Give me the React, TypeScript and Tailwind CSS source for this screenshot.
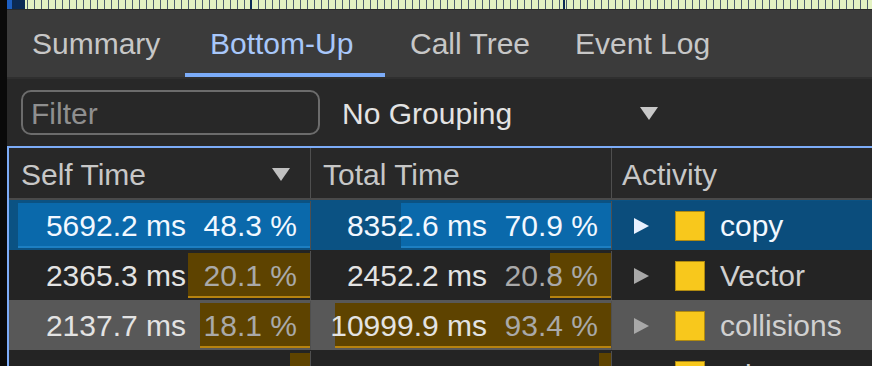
import React from "react";

type RowState = "selected" | "hover" | "normal";

interface Row {
  self: string;
  selfPct: string;
  selfBar: number;
  total: string;
  totalPct: string;
  totalBar: number;
  name: string;
  state: RowState;
}

const rows: Row[] = [
  { self: "5692.2 ms", selfPct: "48.3 %", selfBar: 292, total: "8352.6 ms", totalPct: "70.9 %", totalBar: 210, name: "copy", state: "selected" },
  { self: "2365.3 ms", selfPct: "20.1 %", selfBar: 122, total: "2452.2 ms", totalPct: "20.8 %", totalBar: 61, name: "Vector", state: "normal" },
  { self: "2137.7 ms", selfPct: "18.1 %", selfBar: 110, total: "10999.9 ms", totalPct: "93.4 %", totalBar: 276, name: "collisions", state: "hover" },
  { self: "404.7 ms", selfPct: "3.4 %", selfBar: 20, total: "406.9 ms", totalPct: "3.5 %", totalBar: 12, name: "Minor GC", state: "normal" },
];

const tabs = [
  { label: "Summary", width: "w-[178px]" },
  { label: "Bottom-Up", width: "w-[200px]" },
  { label: "Call Tree", width: "w-[165px]" },
  { label: "Event Log", width: "w-[185px]" },
];

function Triangle({ className = "" }: { className?: string }) {
  return (
    <svg width="18" height="13" viewBox="0 0 18 13" className={className}>
      <path d="M0 0 H18 L9 13 Z" fill="currentColor" />
    </svg>
  );
}

function TimeCell({
  ms,
  pct,
  bar,
  state,
  lead,
}: {
  ms: string;
  pct: string;
  bar: number;
  state: RowState;
  lead?: boolean;
}) {
  const selected = state === "selected";
  return (
    <div
      className={`relative flex items-center justify-end pr-[13px] border-r border-[#4f4f4f] ${
        lead ? "w-[302px]" : "w-[301px]"
      }`}
    >
      <div
        className={`absolute right-0 top-[2px] bottom-[2px] border-b-2 ${
          selected ? "bg-[#0a69ab] border-[#1d7fc2]" : "bg-[#5e4300] border-[#b7830f]"
        }`}
        style={{ width: bar }}
      />
      <span className={`relative ${selected ? "text-[#f2f8ff]" : "text-[#e3e3e3]"}`}>{ms}</span>
      <span
        className={`relative w-[111px] text-right ${selected ? "text-[#f2f8ff]" : "text-[#a9a9a9]"}`}
      >
        {pct}
      </span>
    </div>
  );
}

export default function App() {
  return (
    <div className="flex w-[872px] h-[366px] overflow-hidden bg-black font-['Liberation_Sans',Arial,sans-serif]">
      <div className="w-[7px] shrink-0 bg-[#0a0a0a]" />
      <div className="flex-1 flex flex-col min-w-0">
        {/* timeline strip */}
        <div className="relative h-[9px] shrink-0 bg-[repeating-linear-gradient(90deg,#e3f2c2_0px,#e3f2c2_6px,#4d5d6e_6px,#4d5d6e_7px)]">
          <div className="absolute left-0 top-0 h-full w-[5px] bg-[#1d5fc2]" />
          <div className="absolute left-[5px] top-0 h-full w-[13px] bg-[#0b2a55]" />
          <div className="absolute left-[243px] top-0 h-full w-[2px] bg-[#0b2a55]" />
          <div className="absolute left-[556px] top-0 h-full w-[2px] bg-[#0b2a55]" />
        </div>
        <div className="h-px shrink-0 bg-[#2a2a2a]" />

        {/* tabs */}
        <div className="flex h-[69px] shrink-0 bg-[#3b3b3b] border-b-2 border-[#2f2f2f]">
          {tabs.map((t) => {
            const active = t.label === "Bottom-Up";
            return (
              <div
                key={t.label}
                className={`flex items-center pt-[3px] pl-[25px] text-[30px] border-b-[4px] ${t.width} ${
                  active ? "text-[#a8c7fa] border-[#7cacf8]" : "text-[#c7c7c7] border-transparent"
                }`}
              >
                {t.label}
              </div>
            );
          })}
        </div>

        {/* toolbar */}
        <div className="flex items-center h-[67px] shrink-0 bg-[#282828] pl-[14px]">
          <div className="flex items-center w-[299px] h-[45px] rounded-[10px] border-2 border-[#6c6c6c] pl-[8px] pt-[2px] text-[30px] text-[#8f8f8f]">
            Filter
          </div>
          <div className="flex items-center w-[338px] pl-[22px] pt-[2px] text-[30px] text-[#e3e3e3]">
            <span className="flex-1">No Grouping</span>
            <Triangle className="text-[#c8c8c8]" />
          </div>
        </div>

        {/* table */}
        <div className="flex-1 flex flex-col border-l-2 border-t-2 border-[#7cacf8] bg-[#242424] text-[30px]">
          <div className="flex h-[52px] shrink-0 bg-[#282828] border-b-2 border-[#4a4a4a] text-[#c7c7c7]">
            <div className="flex items-center w-[302px] pl-[12px] pr-[20px] pt-[2px] border-r border-[#4f4f4f]">
              <span className="flex-1">Self Time</span>
              <Triangle className="text-[#c0c0c0]" />
            </div>
            <div className="flex items-center w-[301px] pl-[12px] pt-[2px] border-r border-[#4f4f4f]">Total Time</div>
            <div className="flex items-center flex-1 pl-[10px] pt-[2px]">Activity</div>
          </div>

          {rows.map((r) => {
            const bg =
              r.state === "selected" ? "bg-[#0b5283]" : r.state === "hover" ? "bg-[#585858]" : "bg-[#242424]";
            const selected = r.state === "selected";
            return (
              <div key={r.name} className={`flex h-[50px] shrink-0 pt-[1px] ${bg}`}>
                <TimeCell ms={r.self} pct={r.selfPct} bar={r.selfBar} state={r.state} lead />
                <TimeCell ms={r.total} pct={r.totalPct} bar={r.totalBar} state={r.state} />
                <div
                  className={`flex items-center flex-1 pl-[22px] ${
                    selected ? "bg-[#0b4d7c] text-[#f2f8ff]" : "text-[#d0d0d0]"
                  }`}
                >
                  <svg width="15" height="16" viewBox="0 0 15 16">
                    <path d="M0 0 L15 8 L0 16 Z" fill={selected ? "#e8f0fe" : "#a8a8a8"} />
                  </svg>
                  <div className="ml-[26px] w-[30px] h-[30px] bg-[#f8c81c] border border-[#b08a10]" />
                  <span className="ml-[15px]">{r.name}</span>
                </div>
              </div>
            );
          })}
        </div>
      </div>
    </div>
  );
}
